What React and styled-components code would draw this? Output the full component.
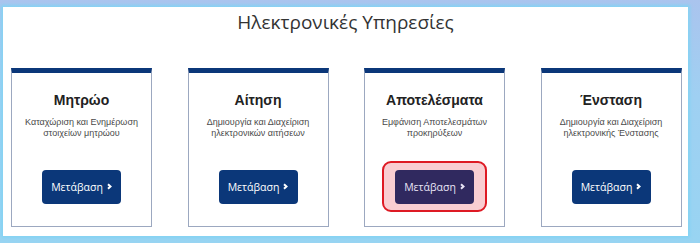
import React from 'react';
import styled, { createGlobalStyle } from 'styled-components';

const GlobalStyle = createGlobalStyle`
  html, body {
    margin: 0;
    padding: 0;
  }
  body {
    width: 700px;
    height: 243px;
    overflow: hidden;
    background: linear-gradient(180deg, #aac4ee 0%, #9fd0f2 40%, #98d4f2 100%);
    font-family: "Liberation Sans", Arial, sans-serif;
  }
`;

const Page = styled.div`
  padding: 7px 0 0 3px;
`;

const Panel = styled.div`
  width: 685px;
  height: 229px;
  background: #ffffff;
  box-shadow: 0 0 3px 2px #84d3f3;
  display: flex;
  flex-direction: column;
`;

const Heading = styled.h1`
  margin: 0;
  padding-top: 2px;
  height: 59px;
  font-family: "Open Sans", sans-serif;
  font-weight: 400;
  font-size: 19px;
  line-height: 26px;
  color: #333333;
  text-align: center;
`;

const Row = styled.div`
  display: flex;
  gap: 35.5px;
  padding-left: 8px;
`;

const Card = styled.div`
  width: 139px;
  height: 153px;
  border: 1px solid #9ca8c0;
  border-top: 5px solid #0b3779;
  display: flex;
  flex-direction: column;
  align-items: center;
`;

const Title = styled.h2`
  margin: 18px 0 0;
  font-size: 14px;
  line-height: 18px;
  font-weight: 700;
  color: #222222;
`;

const Desc = styled.p`
  margin: 8px 0 0;
  height: 22px;
  font-size: 9px;
  line-height: 11px;
  color: #4a4a4a;
  text-align: center;
`;

const ButtonSlot = styled.div`
  margin-top: 31px;
  display: flex;
  justify-content: center;
`;

const Highlight = styled.div`
  margin: -9px -13px -8px;
  padding: 7px 11px 6px;
  border: 2px solid #de1a24;
  border-radius: 9px;
  background: #f9ced2;
  display: flex;
`;

const Button = styled.button`
  width: 79px;
  height: 34px;
  border: none;
  border-radius: 4px;
  background: ${p => (p.$active ? '#30295f' : '#0b3779')};
  color: ${p => (p.$active ? '#e9e4f6' : '#ffffff')};
  font-family: "Open Sans", sans-serif;
  font-size: 10.5px;
  display: flex;
  align-items: center;
  justify-content: center;
  gap: 4px;
  padding: 0 0 1px;
  cursor: pointer;
`;

const Chevron = () => (
  <svg width="5" height="7" viewBox="0 0 5 7" aria-hidden="true">
    <path d="M1 1.2 L3.5 3.5 L1 5.8" fill="none" stroke="currentColor" strokeWidth="2" />
  </svg>
);

const services = [
  { title: 'Μητρώο', lines: ['Καταχώριση και Ενημέρωση', 'στοιχείων μητρώου'] },
  { title: 'Αίτηση', lines: ['Δημιουργία και Διαχείριση', 'ηλεκτρονικών αιτήσεων'] },
  { title: 'Αποτελέσματα', lines: ['Εμφάνιση Αποτελεσμάτων', 'προκηρύξεων'], active: true },
  { title: 'Ένσταση', lines: ['Δημιουργία και Διαχείριση', 'ηλεκτρονικής Ένστασης'] },
];

const GoButton = ({ active }) => (
  <Button $active={active}>
    Μετάβαση <Chevron />
  </Button>
);

const App = () => {
  return (
    <>
      <GlobalStyle />
      <Page>
        <Panel>
          <Heading>Ηλεκτρονικές Υπηρεσίες</Heading>
          <Row>
            {services.map(s => (
              <Card key={s.title}>
                <Title>{s.title}</Title>
                <Desc>
                  {s.lines[0]}<br />
                  {s.lines[1]}
                </Desc>
                <ButtonSlot>
                  {s.active ? (
                    <Highlight>
                      <GoButton active />
                    </Highlight>
                  ) : (
                    <GoButton />
                  )}
                </ButtonSlot>
              </Card>
            ))}
          </Row>
        </Panel>
      </Page>
    </>
  );
};

export default App;
